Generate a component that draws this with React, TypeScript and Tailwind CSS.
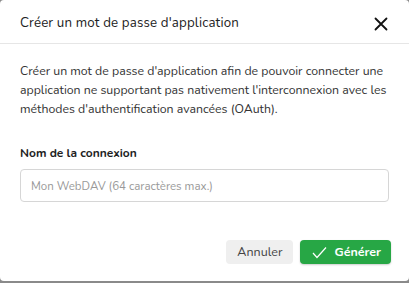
import React from 'react'

const App = () => {
    return (
        <div className="w-[409px] h-[283px] bg-[#8a8a8a]" style={{ fontFamily: 'Nunito, Lato, sans-serif' }}>
            <div className="w-[409px] h-[281px] bg-white rounded-[4px] flex flex-col text-[#222]">
                {/* Header */}
                <div className="flex items-center justify-between h-[44px] px-5 pt-[4px] border-b border-[#e6e6e6]">
                    <h2 className="text-[13.3px] tracking-[0.15px] text-[#222]">Créer un mot de passe d'application</h2>
                    <svg width="14" height="14" viewBox="0 0 14 14" className="mr-[1px]">
                        <path d="M1.5 1.5L12.5 12.5M12.5 1.5L1.5 12.5" stroke="#111" strokeWidth="1.8" strokeLinecap="round" />
                    </svg>
                </div>

                {/* Body */}
                <div className="px-5 pt-[18px]">
                    <p className="text-[12.3px] leading-[19px] text-[#333]">
                        Créer un mot de passe d'application afin de pouvoir connecter une application ne supportant pas nativement l'interconnexion avec les méthodes d'authentification avancées (OAuth).
                    </p>

                    <label className="block mt-[25px] text-[12px] font-bold text-[#222]">Nom de la connexion</label>
                    <input
                        className="mt-[7px] w-full h-[33px] px-[10px] text-[11.5px] border border-[#d6d6d6] rounded-[4px] placeholder:text-[#999] outline-none"
                        placeholder="Mon WebDAV (64 caractères max.)"
                    />
                </div>

                {/* Footer */}
                <div className="flex justify-end gap-[7px] px-[18px] mt-[38px]">
                    <button className="h-[24px] px-[11px] rounded-[4px] bg-[#efefef] text-[12.5px] text-[#444]">Annuler</button>
                    <button className="h-[24px] pl-[12px] pr-[10px] rounded-[4px] bg-[#27a745] text-[12.5px] font-bold text-white flex items-center gap-[7px] shadow-[0_1px_2px_rgba(0,0,0,0.2)]">
                        <svg width="15" height="13" viewBox="0 0 15 13">
                            <path d="M1 7L5 11.5L14 1.5" stroke="#fff" strokeWidth="1.2" fill="none" />
                        </svg>
                        Générer
                    </button>
                </div>
            </div>
        </div>
    )
}

export default App
